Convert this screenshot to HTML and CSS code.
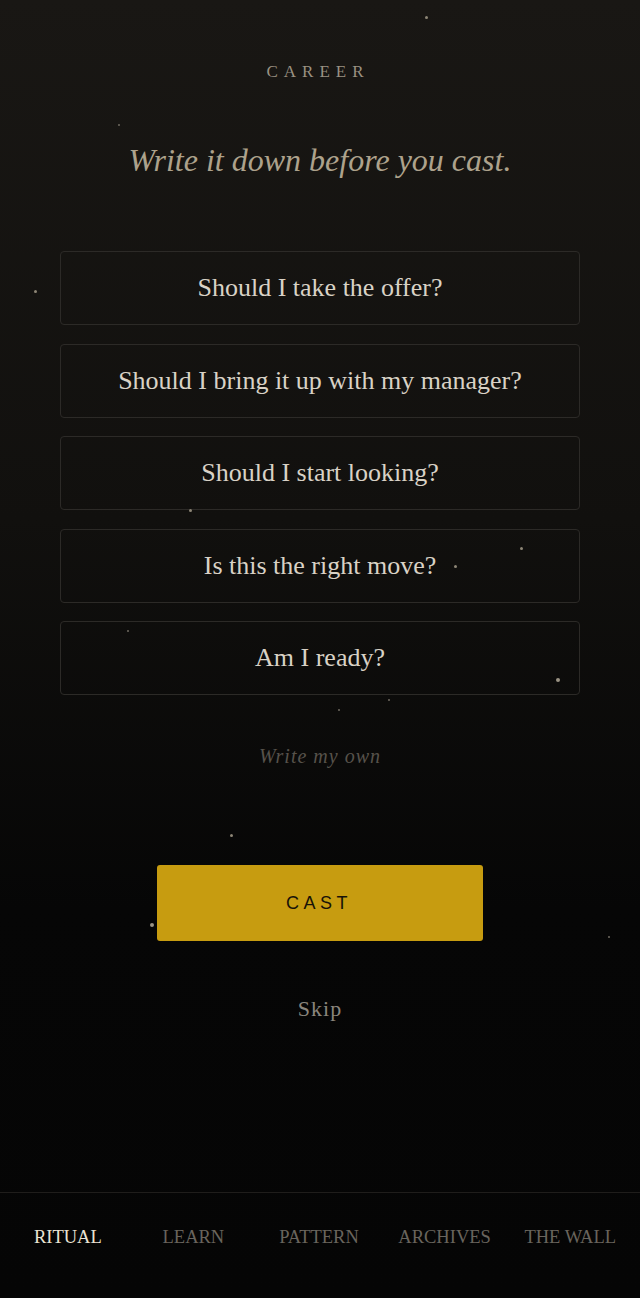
FILE: index.html
```html
<!DOCTYPE html>
<html lang="en">
<head>
    <meta charset="UTF-8">
    <meta name="viewport" content="width=device-width, initial-scale=1.0">
    <title>Ritual - Career</title>
    <link rel="stylesheet" href="styles.css">
</head>
<body>

    <!-- poeira de estrelas -->
    <div class="stars">
        <span class="star" style="left:425px;top:16px"></span>
        <span class="star tiny" style="left:118px;top:124px"></span>
        <span class="star" style="left:34px;top:290px"></span>
        <span class="star" style="left:189px;top:509px"></span>
        <span class="star" style="left:520px;top:547px"></span>
        <span class="star" style="left:454px;top:565px"></span>
        <span class="star tiny" style="left:127px;top:630px"></span>
        <span class="star big" style="left:556px;top:678px"></span>
        <span class="star tiny" style="left:338px;top:709px"></span>
        <span class="star tiny" style="left:388px;top:699px"></span>
        <span class="star" style="left:230px;top:834px"></span>
        <span class="star big" style="left:150px;top:923px"></span>
        <span class="star tiny" style="left:608px;top:936px"></span>
    </div>

    <main class="ritual">
        <p class="category">CAREER</p>
        <h1 class="prompt">Write it down before you cast.</h1>

        <!-- perguntas sugeridas -->
        <div class="options">
            <button class="option">Should I take the offer?</button>
            <button class="option">Should I bring it up with my manager?</button>
            <button class="option">Should I start looking?</button>
            <button class="option">Is this the right move?</button>
            <button class="option">Am I ready?</button>
        </div>

        <button class="own">Write my own</button>

        <button class="cast">CAST</button>
        <button class="skip">Skip</button>
    </main>

    <nav class="tabs">
        <a class="tab active">RITUAL</a>
        <a class="tab">LEARN</a>
        <a class="tab">PATTERN</a>
        <a class="tab">ARCHIVES</a>
        <a class="tab">THE WALL</a>
    </nav>

</body>
</html>
```

FILE: styles.css
```css
/* corpo da pagina */
body {
    margin: 0;
    padding: 0;
    min-height: 100vh;
    background: linear-gradient(180deg, #191714 0%, #11100e 40%, #060606 70%, #050505 100%);
    display: flex;
    flex-direction: column;
    position: relative;
    font-family: 'Liberation Serif', 'DejaVu Serif', serif;
    color: #d8d0c4;
}

/* estrelas soltas */
.stars {
    position: absolute;
    inset: 0;
    pointer-events: none;
}

.star {
    position: absolute;
    width: 3px;
    height: 3px;
    border-radius: 50%;
    background: #8d8676;
}

.star.tiny {
    width: 2px;
    height: 2px;
    background: #6f6a60;
}

.star.big {
    width: 4px;
    height: 4px;
    background: #9a9384;
}

.ritual {
    display: flex;
    flex-direction: column;
    align-items: center;
    padding-top: 62px;
}

.category {
    margin: 0;
    font-size: 17px;
    line-height: 20px;
    letter-spacing: 6px;
    padding-right: 4px;
    color: #9a9182;
}

.prompt {
    margin: 58px 0 0;
    font-size: 32px;
    line-height: 40px;
    font-weight: normal;
    font-style: italic;
    color: #ada28c;
}

/* lista de perguntas */
.options {
    width: 520px;
    margin-top: 71px;
    display: flex;
    flex-direction: column;
    gap: 18.5px;
}

.option {
    height: 74px;
    background: transparent;
    border: 1px solid #2c2a27;
    border-radius: 4px;
    font-family: inherit;
    font-size: 26px;
    color: #d9d2c6;
    cursor: pointer;
}

.own {
    margin-top: 45px;
    background: none;
    border: none;
    font-family: inherit;
    font-style: italic;
    font-size: 20px;
    line-height: 30px;
    letter-spacing: 1px;
    color: #57524b;
    cursor: pointer;
}

.cast {
    margin-top: 93px;
    width: 326px;
    height: 76px;
    background: #c79c10;
    border: none;
    border-radius: 3px;
    font-family: 'Liberation Sans', Arial, sans-serif;
    font-size: 18px;
    letter-spacing: 4.5px;
    padding-left: 4px;
    color: #171208;
    cursor: pointer;
}

.skip {
    margin-top: 52px;
    background: none;
    border: none;
    font-family: inherit;
    font-size: 22px;
    line-height: 30px;
    letter-spacing: 1px;
    color: #8a857d;
    cursor: pointer;
}

/* barra de navegacao */
.tabs {
    margin-top: auto;
    height: 106px;
    border-top: 1px solid #1f1d1b;
    display: grid;
    grid-template-columns: repeat(5, 1fr);
    align-items: start;
    padding: 32px 7px 0 5px;
    box-sizing: border-box;
}

.tab {
    text-align: center;
    font-size: 18.5px;
    line-height: 24px;
    color: #69645d;
    cursor: pointer;
}

.tab.active {
    color: #ece4d4;
}
```
